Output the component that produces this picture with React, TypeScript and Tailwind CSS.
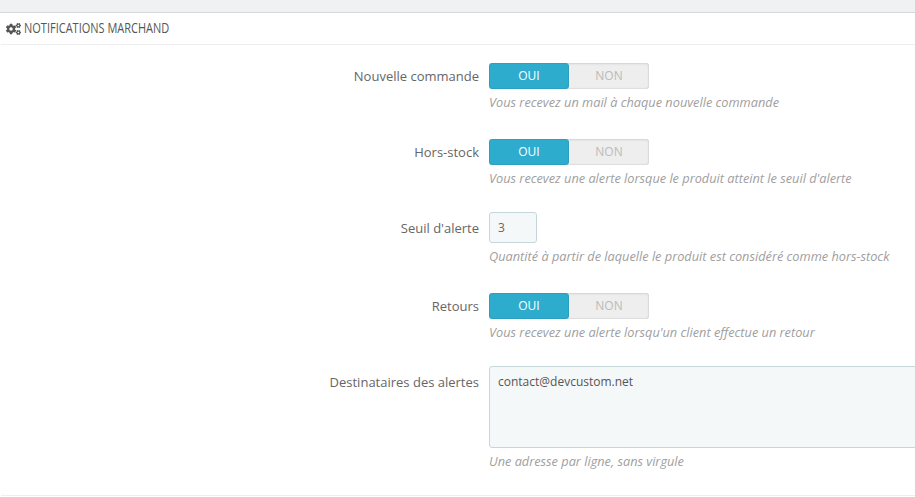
import React from 'react';
import { FaCogs } from 'react-icons/fa';

const Toggle: React.FC = () => (
  <div className="flex h-[26px] w-[160px] rounded-[3px] bg-[#eeeeee] text-[12px] leading-[26px] shadow-[inset_0_1px_2px_#d0d0d0,inset_-1px_-1px_1px_#dddddd]">
    <div className="w-[80px] rounded-[3px] border border-[#2a9fbf] bg-[#2eacce] text-center leading-[24px] text-white">OUI</div>
    <div className="w-[80px] text-center text-[#bbbbbb]">NON</div>
  </div>
);

const Row: React.FC<{ label: string; help: string; top: string; labelTop: string; children: React.ReactNode }> = ({ label, help, top, labelTop, children }) => (
  <div className={`flex ${top}`}>
    <label className={`w-[479px] shrink-0 text-right text-[13px] leading-[18px] text-[#666666] ${labelTop}`}>{label}</label>
    <div className="ml-[10px] min-w-0 flex-1">
      {children}
      <p className="mt-[4px] mb-[1px] whitespace-nowrap text-[12.75px] leading-[18px] italic text-[#a0a0a0]">{help}</p>
    </div>
  </div>
);

export default function App() {
  return (
    <div className="h-[497px] w-[915px] overflow-hidden bg-white font-['Open_Sans',sans-serif]">
      <div className="h-[13px] border-b border-[#d3d8db] bg-[#eff1f2]" />
      <div className="ml-px flex h-[32px] items-center gap-[3px] border-b border-[#eeeeee] pl-[5px]">
        <FaCogs className="h-[14px] w-[15px] shrink-0 text-[#555555]" />
        <h3 className="origin-left scale-x-[0.775] whitespace-nowrap pb-[2px] text-[14.2px] leading-[28px] text-[#555555]">NOTIFICATIONS MARCHAND</h3>
      </div>

      <Row top="mt-[18px]" labelTop="pt-[4px]" label="Nouvelle commande" help="Vous recevez un mail à chaque nouvelle commande">
        <Toggle />
      </Row>
      <Row top="mt-[27px]" labelTop="pt-[4px]" label="Hors-stock" help="Vous recevez une alerte lorsque le produit atteint le seuil d'alerte">
        <Toggle />
      </Row>
      <Row top="mt-[24px]" labelTop="pt-[7px]" label="Seuil d'alerte" help="Quantité à partir de laquelle le produit est considéré comme hors-stock">
        <div className="h-[31px] w-[48px] rounded-[3px] border border-[#c7d6db] bg-[#f5f8f9] px-[8px] text-[12px] leading-[30px] text-[#666666]">3</div>
      </Row>
      <Row top="mt-[27px]" labelTop="pt-[4px]" label="Retours" help="Vous recevez une alerte lorsqu'un client effectue un retour">
        <Toggle />
      </Row>
      <Row top="mt-[24px]" labelTop="pt-[7px]" label="Destinataires des alertes" help="Une adresse par ligne, sans virgule">
        <div className="h-[82px] w-[440px] rounded-[3px] border border-[#c7d6db] bg-[#f5f8f9] px-[8px] py-[6px] text-[12px] leading-[18px] text-[#555555]">contact@devcustom.net</div>
      </Row>
      <div className="mt-[24px] ml-px border-b border-[#eeeeee]" />
    </div>
  );
}
